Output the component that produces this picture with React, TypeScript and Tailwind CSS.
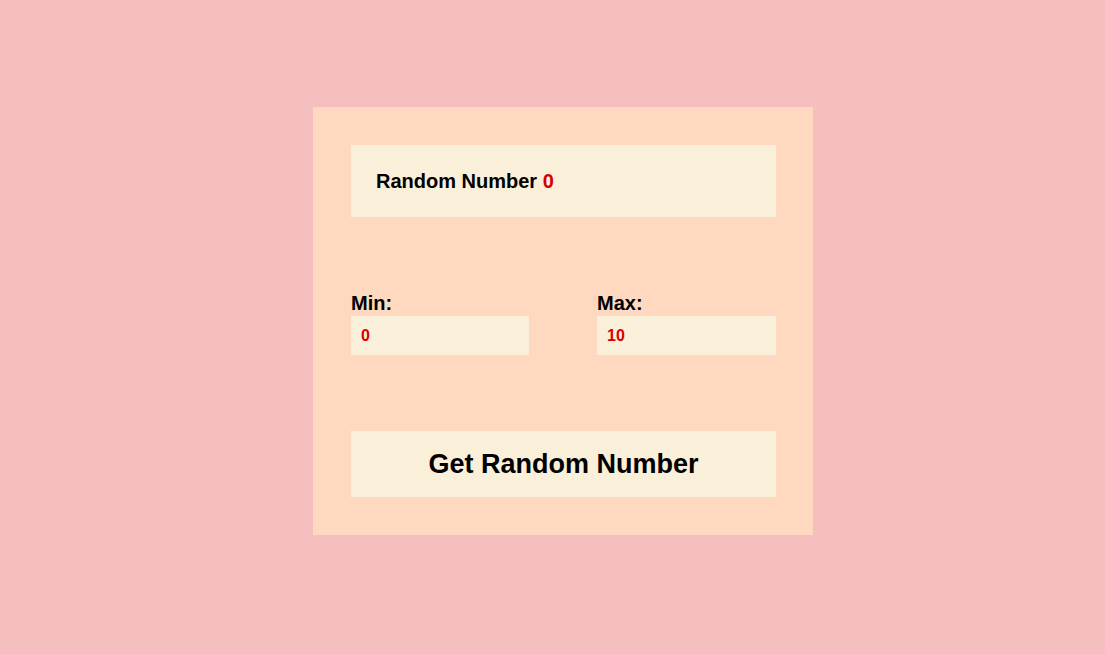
import { FC, useState } from 'react';

// Random number picker card
const App: FC = () => {
	const [min, setMin] = useState('0');
	const [max, setMax] = useState('10');
	const [num, setNum] = useState(0);

	const roll = () => {
		const lo = parseInt(min) || 0;
		const hi = parseInt(max) || 0;
		setNum(Math.floor(Math.random() * (hi - lo + 1)) + lo);
	};

	return (
		<div className="min-h-[654px] bg-[#f6bfbf] pt-[107px] pl-[313px] font-['Liberation_Sans',Arial,sans-serif]">
			<div className="w-[500px] bg-[#fed8bf] pt-[38px] pb-[38px] pl-[38px] pr-[37px]">
				<div className="h-[72px] bg-[#faefd9] flex items-center pl-[25px]">
					<h1 className="text-[20px] font-bold text-black leading-[23px]">
						Random Number <span className="text-[#d50000]">{num}</span>
					</h1>
				</div>

				<div className="mt-[74px] flex justify-between">
					<div className="w-[178px] flex flex-col">
						<label className="text-[20px] font-bold leading-[25px] text-black">Min:</label>
						<input
							className="h-[39px] bg-[#faefd9] px-[10px] text-[16px] font-bold text-[#d50000] outline-none"
							value={min}
							onChange={(e) => setMin(e.target.value)}
						/>
					</div>
					<div className="w-[179px] flex flex-col">
						<label className="text-[20px] font-bold leading-[25px] text-black">Max:</label>
						<input
							className="h-[39px] bg-[#faefd9] px-[10px] text-[16px] font-bold text-[#d50000] outline-none"
							value={max}
							onChange={(e) => setMax(e.target.value)}
						/>
					</div>
				</div>

				<button
					className="mt-[76px] w-full h-[66px] bg-[#faefd9] text-[27px] font-bold text-black cursor-pointer"
					onClick={roll}
				>
					Get Random Number
				</button>
			</div>
		</div>
	);
};

export default App;
